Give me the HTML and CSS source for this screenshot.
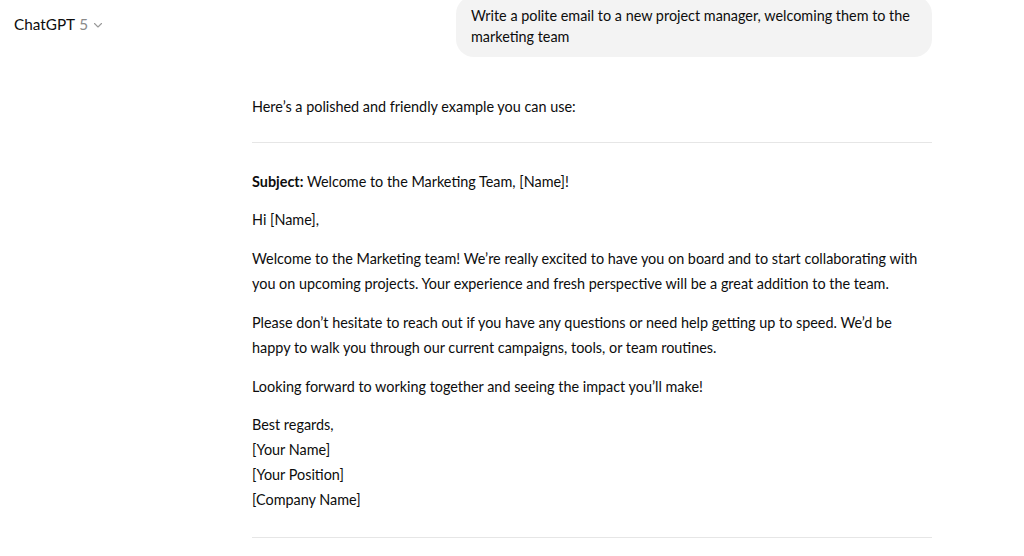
FILE: index.html
```html
<!DOCTYPE html>
<html lang="en">
<head>
<meta charset="utf-8">
<title>ChatGPT</title>
<link rel="stylesheet" href="styles.css">
</head>
<body>
<header class="topbar">
  <span class="model-name">ChatGPT</span>
  <span class="model-version">5</span>
  <svg class="chevron" width="10" height="10" viewBox="0 0 10 10" aria-hidden="true"><path d="M1.5 3.5 L5 7 L8.5 3.5" fill="none" stroke="currentColor" stroke-width="1.1" stroke-linecap="round" stroke-linejoin="round"/></svg>
</header>
<main class="thread">
  <div class="user-row">
    <div class="bubble">Write a polite email to a new project manager, welcoming them to the marketing team</div>
  </div>
  <article class="assistant">
    <p class="intro">Here’s a polished and friendly example you can use:</p>
    <hr class="rule">
    <p><strong>Subject:</strong> Welcome to the Marketing Team, [Name]!</p>
    <p>Hi [Name],</p>
    <p>Welcome to the Marketing team! We’re really excited to have you on board and to start collaborating with you on upcoming projects. Your experience and fresh perspective will be a great addition to the team.</p>
    <p>Please don’t hesitate to reach out if you have any questions or need help getting up to speed. We’d be happy to walk you through our current campaigns, tools, or team routines.</p>
    <p>Looking forward to working together and seeing the impact you’ll make!</p>
    <p>Best regards,<br>[Your Name]<br>[Your Position]<br>[Company Name]</p>
    <hr class="rule rule-end">
  </article>
</main>
</body>
</html>
```
FILE: styles.css
```css
html, body {
  margin: 0;
  padding: 0;
  background: #ffffff;
  overflow: hidden;
}
body {
  font-family: "Lato", "Open Sans", "Noto Sans", sans-serif;
  font-size: 14.4px;
  color: #0d0d0d;
  height: 556px;
  position: relative;
}
.topbar {
  position: absolute;
  top: 13px;
  left: 14px;
  display: flex;
  align-items: center;
  gap: 4px;
  font-size: 15.3px;
  line-height: 22px;
}
.model-name {
  color: #0d0d0d;
}
.model-version {
  color: #8a8a8a;
}
.chevron {
  color: #9a9a9a;
  margin-left: 1px;
  margin-top: 1px;
}
.thread {
  width: 680px;
  margin-left: 252px;
}
.user-row {
  display: flex;
  justify-content: flex-end;
}
.bubble {
  max-width: 70%;
  box-sizing: border-box;
  margin-top: -4px;
  padding: 9px 17px 10px 15px;
  background: #f3f3f3;
  border-radius: 18px;
  line-height: 21px;
}
.assistant {
  margin-top: 36.5px;
  line-height: 25px;
}
.assistant p {
  margin: 13.75px 0;
}
.assistant p.intro {
  margin: 0;
}
.assistant strong {
  font-weight: 700;
}
.rule {
  border: 0;
  height: 1px;
  background: #e6e6e6;
  margin: 23.5px 0 25.5px;
}
.rule-end {
  margin-top: 24.5px;
}
```
